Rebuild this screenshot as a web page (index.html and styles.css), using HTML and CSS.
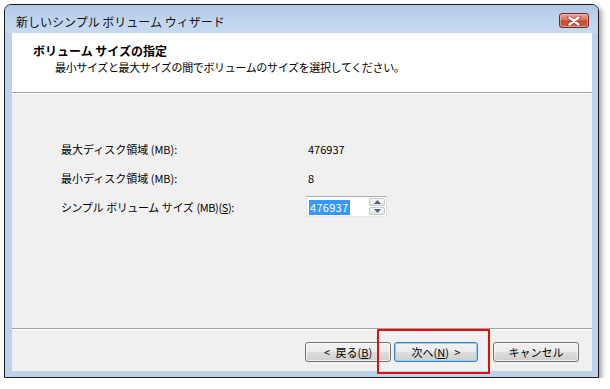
FILE: index.html
```html
<!DOCTYPE html>
<html lang="ja">
<head>
<meta charset="utf-8">
<title>新しいシンプル ボリューム ウィザード</title>
<link rel="stylesheet" href="styles.css">
</head>
<body>
<div class="window">
  <div class="titlebar">
    <span class="title">新しいシンプル ボリューム ウィザード</span>
    <div class="close">
      <svg width="14" height="10" viewBox="0 0 14 10">
        <path d="M2 1 L12 9 M12 1 L2 9" stroke="#5a1a10" stroke-width="3.6" stroke-linecap="round" opacity="0.5"/>
        <path d="M2.5 1.5 L11.5 8.5 M11.5 1.5 L2.5 8.5" stroke="#ffffff" stroke-width="2.4" stroke-linecap="round"/>
      </svg>
    </div>
  </div>
  <div class="content">
    <div class="header">
      <div class="h-title">ボリューム サイズの指定</div>
      <div class="h-sub">最小サイズと最大サイズの間でボリュームのサイズを選択してください。</div>
    </div>
    <div class="body">
      <div class="row"><span class="label">最大ディスク領域 (MB):</span><span class="value">476937</span></div>
      <div class="row"><span class="label">最小ディスク領域 (MB):</span><span class="value">8</span></div>
      <div class="row">
        <span class="label narrow">シンプル ボリューム サイズ (MB)(<u>S</u>):</span>
        <div class="spin">
          <div class="spin-input"><span class="sel">476937</span></div>
          <div class="spin-btns">
            <div class="spin-btn"><svg width="7" height="4" viewBox="0 0 7 4"><path d="M0 4 L3.5 0 L7 4 Z" fill="#4d6185"/></svg></div>
            <div class="spin-btn"><svg width="7" height="4" viewBox="0 0 7 4"><path d="M0 0 L3.5 4 L7 0 Z" fill="#4d6185"/></svg></div>
          </div>
        </div>
      </div>
    </div>
    <div class="footer">
      <button class="btn">&lt; 戻る(<u>B</u>)</button>
      <button class="btn default">次へ(<u>N</u>) &gt;</button>
      <button class="btn cancel">キャンセル</button>
    </div>
  </div>
  <div class="highlight"></div>
</div>
</body>
</html>
```
FILE: styles.css
```css
* { box-sizing: border-box; }
html, body {
  margin: 0;
  padding: 0;
  background: #ffffff;
  font-family: "Noto Sans CJK JP", "Noto Sans", sans-serif;
}
.window {
  position: relative;
  margin: 4px 0 0 4px;
  width: 595px;
  height: 374px;
  border: 1px solid #1c1c1c;
  border-radius: 7px 7px 0 0;
  background: #bdd3ec;
  padding: 0 6px 6px 7px;
  display: flex;
  flex-direction: column;
  box-shadow: 3px 3px 5px rgba(0, 0, 0, 0.35);
}
.titlebar {
  height: 28px;
  margin: 0 -6px 0 -7px;
  padding: 0 9px 0 11px;
  border-radius: 6px 6px 0 0;
  background: linear-gradient(#b0c8e5, #c1d6ee 60%, #c6daf0);
  display: flex;
  justify-content: space-between;
  align-items: flex-start;
}
.title {
  font-size: 12px;
  line-height: 14px;
  margin-top: 10px;
  color: #111;
}
.close {
  margin-top: 8px;
  width: 30px;
  height: 15px;
  border: 1px solid #6b2b22;
  border-radius: 3px;
  background: linear-gradient(#e8a593, #d8735d 45%, #c4482f 55%, #d1674b);
  display: flex;
  align-items: center;
  justify-content: center;
  box-shadow: inset 0 0 0 1px rgba(255, 220, 210, 0.45);
}
.content {
  flex: 1;
  background: #f0f0f0;
  display: flex;
  flex-direction: column;
}
.header {
  height: 60px;
  background: #ffffff;
  border-bottom: 1px solid #a0a0a0;
  box-shadow: 0 1px 0 #ffffff;
  padding: 10px 0 0 21px;
}
.h-title {
  font-size: 12px;
  font-weight: bold;
  line-height: 15px;
  color: #000;
}
.h-sub {
  font-size: 11px;
  line-height: 15px;
  margin: 2px 0 0 22px;
  letter-spacing: -0.35px;
  color: #000;
}
.body {
  flex: 1;
  padding: 41px 0 0 49px;
  display: flex;
  flex-direction: column;
}
.row {
  height: 29px;
  display: flex;
  align-items: center;
  font-size: 11px;
  color: #000;
}
.label {
  width: 245px;
  line-height: 14px;
}
.label.narrow {
  letter-spacing: -0.4px;
  word-spacing: 1px;
}
.value {
  padding-left: 2px;
  line-height: 14px;
}
.spin {
  display: flex;
  width: 81px;
  height: 21px;
  border: 1px solid #abadb3;
  border-color: #abadb3 #dbdfe6 #e3e9ef #e2e3ea;
  background: #fff;
}
.spin-input {
  flex: 1;
  padding: 1px 0 0 2px;
  display: flex;
  align-items: center;
}
.sel {
  background: #3399ff;
  color: #fff;
  font-size: 11px;
  line-height: 15px;
  padding: 0 2px 0 1px;
  letter-spacing: 0.3px;
}
.spin-btns {
  width: 17px;
  display: flex;
  flex-direction: column;
  padding: 1px 1px 1px 0;
  gap: 1px;
}
.spin-btn {
  flex: 1;
  border: 1px solid #c5c9d0;
  border-radius: 2px;
  background: linear-gradient(#f7f7f7, #e4e4e4);
  display: flex;
  align-items: center;
  justify-content: center;
}
.footer {
  height: 43px;
  border-top: 1px solid #a0a0a0;
  box-shadow: inset 0 1px 0 #ffffff;
  display: flex;
  justify-content: flex-end;
  align-items: flex-start;
  padding: 13px 13px 0 0;
}
.btn {
  width: 86px;
  height: 20px;
  margin: 0;
  padding: 0;
  border: 1px solid #707070;
  border-radius: 3px;
  background: linear-gradient(#f2f2f2, #ebebeb 48%, #dddddd 52%, #cfcfcf);
  box-shadow: inset 0 0 0 1px rgba(255, 255, 255, 0.7);
  font-family: "Noto Sans CJK JP", "Noto Sans", sans-serif;
  font-size: 11px;
  line-height: 16px;
  word-spacing: 3px;
  color: #000;
}
.btn.default {
  width: 84px;
  margin-left: 3px;
  border-color: #3c7fb1;
  box-shadow: inset 0 0 0 1px #8fd4f5;
}
.btn.cancel {
  margin-left: 15px;
}
.highlight {
  position: absolute;
  left: 372px;
  top: 324px;
  width: 113px;
  height: 45px;
  border: 2px solid #e01010;
}
```
